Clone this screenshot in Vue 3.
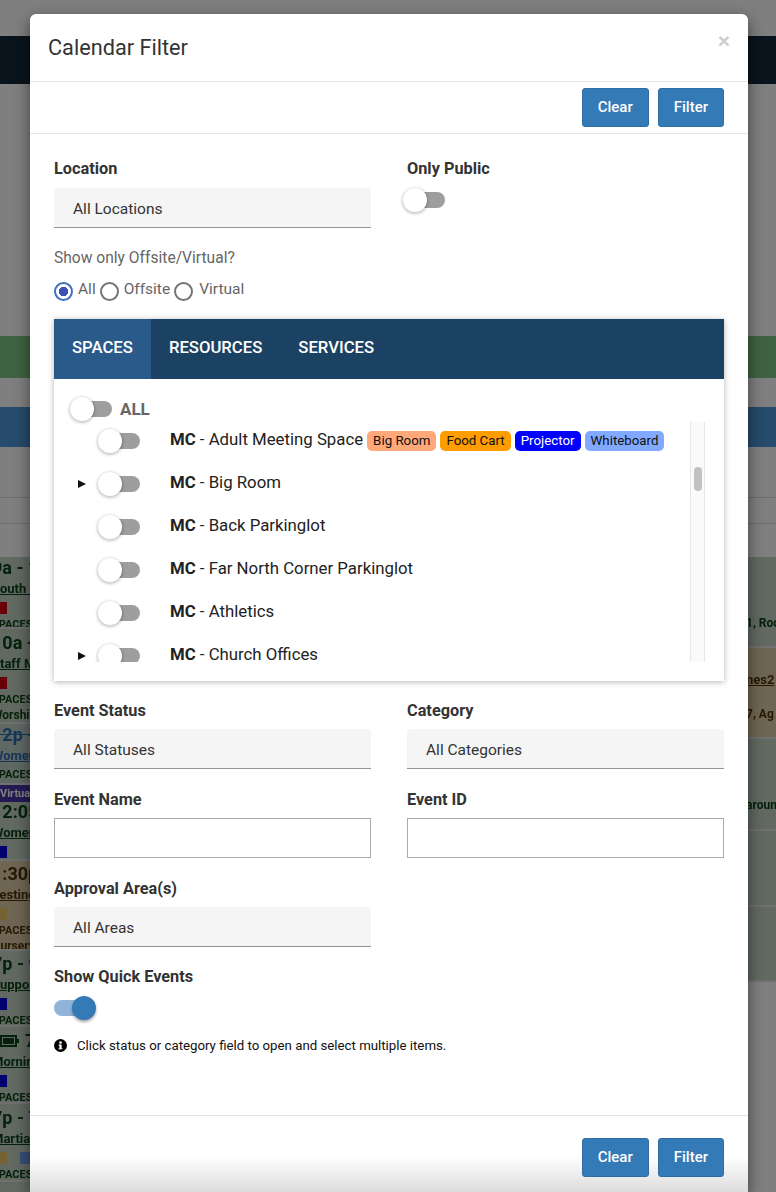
<template>
  <div class="page">
    <div class="backdrop-page">
      <div class="top-strip"></div>
      <div class="nav-bar"></div>
      <div class="spacer-a"></div>
      <div class="green-bar"></div>
      <div class="spacer-b"></div>
      <div class="blue-bar"></div>
      <div class="spacer-c"></div>
      <div class="rule"></div>
      <div class="spacer-d"></div>
      <div class="rule"></div>
      <div class="spacer-e"></div>
      <div class="cal-cols">
        <div class="cal-col">
          <div v-for="(ev, i) in leftEvents" :key="i" class="ev" :class="ev.tone" :style="{ height: ev.h + 'px', paddingTop: ev.pad + 'px' }">
            <div v-if="ev.badge" class="ev-badge">{{ ev.badge }}</div>
            <div class="ev-title" :class="{ struck: ev.struck }">
              <svg v-if="ev.battery" class="ev-batt" width="20" height="12" viewBox="0 0 20 12"><rect x="1" y="1" width="15" height="10" fill="none" stroke="currentColor" stroke-width="2"/><rect x="3" y="3" width="11" height="6" fill="currentColor"/><rect x="17" y="4" width="2" height="4" fill="currentColor"/></svg>{{ ev.title }}
            </div>
            <div class="ev-sub" :class="{ struck: ev.struck }">{{ ev.sub }}</div>
            <div v-if="ev.squares" class="ev-squares">
              <span v-for="c in ev.squares" :key="c" class="ev-sq" :style="{ background: c }"></span>
            </div>
            <div v-if="ev.spaces" class="ev-spaces">SPACES</div>
            <div v-if="ev.extra" class="ev-extra">{{ ev.extra }}</div>
          </div>
        </div>
        <div class="cal-col right">
          <div v-for="(ev, i) in rightEvents" :key="i" class="ev" :class="ev.tone" :style="{ height: ev.h + 'px', paddingTop: ev.pad + 'px' }">
            <div v-if="ev.under" class="ev-under">{{ ev.under }}</div>
            <div class="ev-place">{{ ev.text }}</div>
          </div>
        </div>
      </div>
    </div>
    <div class="overlay"></div>

    <div class="modal">
      <div class="modal-head">
        <h4 class="modal-title">Calendar Filter</h4>
        <span class="modal-close">×</span>
      </div>
      <div class="modal-tools">
        <button class="btn">Clear</button>
        <button class="btn">Filter</button>
      </div>

      <div class="modal-body">
        <div class="form-grid first">
          <div>
            <label class="lbl">Location</label>
            <div class="fake-select">All Locations</div>
          </div>
          <div>
            <label class="lbl">Only Public</label>
            <div class="sw public-sw"><span class="track"></span><span class="thumb"></span></div>
          </div>
        </div>

        <div class="offsite-q">Show only Offsite/Virtual?</div>
        <div class="radios">
          <span class="radio on"></span><span class="radio-text">All</span>
          <span class="radio"></span><span class="radio-text">Offsite</span>
          <span class="radio"></span><span class="radio-text">Virtual</span>
        </div>

        <div class="tab-card">
          <div class="tab-bar">
            <div v-for="(t, i) in tabs" :key="t" class="tab" :class="{ active: i === 0 }">{{ t }}</div>
          </div>
          <div class="tab-body">
            <div class="all-row">
              <div class="sw"><span class="track"></span><span class="thumb"></span></div>
              <span class="all-text">ALL</span>
            </div>
            <div class="tree-wrap">
              <div class="tree">
                <div v-for="row in spaces" :key="row.name" class="tree-row">
                  <span class="caret"><span v-if="row.kids" class="caret-shape"></span></span>
                  <div class="sw"><span class="track"></span><span class="thumb"></span></div>
                  <span class="row-name"><b>MC</b> - {{ row.name }}</span>
                  <span v-for="tag in row.tags" :key="tag.text" class="tag" :style="{ background: tag.bg, color: tag.fg }">{{ tag.text }}</span>
                </div>
              </div>
              <div class="scroll-track"><span class="scroll-thumb"></span></div>
            </div>
          </div>
        </div>

        <div class="form-grid lower">
          <div>
            <label class="lbl">Event Status</label>
            <div class="fake-select">All Statuses</div>
          </div>
          <div>
            <label class="lbl">Category</label>
            <div class="fake-select">All Categories</div>
          </div>
          <div>
            <label class="lbl">Event Name</label>
            <input class="txt" type="text" />
          </div>
          <div>
            <label class="lbl">Event ID</label>
            <input class="txt" type="text" />
          </div>
          <div>
            <label class="lbl">Approval Area(s)</label>
            <div class="fake-select">All Areas</div>
          </div>
        </div>

        <label class="lbl quick-lbl">Show Quick Events</label>
        <div class="sw quick-sw"><span class="track"></span><span class="thumb"></span></div>

        <div class="info-line">
          <svg width="13" height="13" viewBox="0 0 13 13">
            <circle cx="6.5" cy="6.5" r="6.5" fill="#000" />
            <circle cx="6.5" cy="3.5" r="1.3" fill="#fff" />
            <rect x="5.4" y="5.6" width="2.2" height="4" fill="#fff" />
            <rect x="4.6" y="5.6" width="2" height="1" fill="#fff" />
            <rect x="4.6" y="9.2" width="3.8" height="1.1" fill="#fff" />
          </svg>
          <span>Click status or category field to open and select multiple items.</span>
        </div>
      </div>

      <div class="modal-foot">
        <button class="btn">Clear</button>
        <button class="btn">Filter</button>
      </div>
    </div>
  </div>
</template>

<script setup>
const tabs = ['Spaces', 'Resources', 'Services']

const spaces = [
  {
    name: 'Adult Meeting Space',
    tags: [
      { text: 'Big Room', bg: '#ffa97b', fg: '#111' },
      { text: 'Food Cart', bg: '#ff9c00', fg: '#111' },
      { text: 'Projector', bg: '#0000ff', fg: '#fff' },
      { text: 'Whiteboard', bg: '#80a9ff', fg: '#111' }
    ]
  },
  { name: 'Big Room', kids: true },
  { name: 'Back Parkinglot' },
  { name: 'Far North Corner Parkinglot' },
  { name: 'Athletics' },
  { name: 'Church Offices', kids: true }
]

const RED = '#d00010'
const BLUE = '#0000e0'
const GOLD = '#e8c460'

const leftEvents = [
  { tone: 'green', h: 72, pad: 1, title: '9a - 10a', sub: 'South Hall', squares: [RED], spaces: true },
  { tone: 'green', h: 95, pad: 4, title: '10a - 11a', sub: 'Staff Mtg', squares: [RED], spaces: true, extra: 'Worship' },
  { tone: 'slate', h: 61, pad: 1, title: '12p - 1p', sub: 'Women', spaces: true, struck: true },
  { tone: 'green', h: 76, pad: 0, badge: 'Virtual', title: '12:05p', sub: 'Women', squares: [BLUE] },
  { tone: 'tan', h: 90, pad: 3, title: '1:30p - 2p', sub: 'Testing', squares: [GOLD], spaces: true, extra: 'Nursery' },
  { tone: 'green', h: 76, pad: 3, title: '7p - 9p', sub: 'Support', squares: [BLUE], spaces: true },
  { tone: 'green', h: 77, pad: 4, battery: true, title: '7p', sub: 'Morning', squares: [BLUE], spaces: true },
  { tone: 'green', h: 78, pad: 4, title: '7p - 7p', sub: 'Martial', squares: [GOLD, '#6fa0e8'], spaces: true },
  { tone: 'green', h: 20, pad: 8, title: '7p - 8p', sub: '' }
]

const rightEvents = [
  { tone: 'green', h: 91, pad: 58, text: '1, Room' },
  { tone: 'tan', h: 91, pad: 22, under: 'nes2', text: '7, Ag' },
  { tone: 'green', h: 92, pad: 58, text: 'around' },
  { tone: 'green', h: 76, pad: 0, text: '' },
  { tone: 'green', h: 75, pad: 0, text: '' }
]
</script>

<style scoped>
.page { position: relative; width: 776px; height: 1192px; overflow: hidden; background: #fff; font-family: Roboto, "Liberation Sans", sans-serif; }

.backdrop-page { filter: blur(0.5px); }
.top-strip { height: 36px; }
.nav-bar { height: 48px; background: #14293a; }
.spacer-a { height: 252px; }
.green-bar { height: 42px; background: #7fc684; }
.spacer-b { height: 29px; }
.blue-bar { height: 40px; background: #4c96d8; }
.spacer-c { height: 50px; }
.rule { height: 1px; background: #d8d8d8; }
.spacer-d { height: 25px; }
.spacer-e { height: 33px; }

.cal-cols { display: flex; justify-content: space-between; }
.cal-col { width: 30px; overflow: hidden; }
.cal-col.right { width: 28px; }

.ev { box-sizing: border-box; overflow: hidden; white-space: nowrap; border-bottom: 2px solid #e0e0e0; font-weight: 700; }
.ev.green { background: #c2d2c2; color: #0b4316; }
.ev.slate { background: #c0d0c8; color: #0b4316; }
.ev.tan { background: #dccca4; color: #4e3208; }

.ev-title, .ev-sub, .ev-spaces, .ev-extra { margin-left: -8px; }
.ev-title { font-size: 18px; line-height: 20px; }
.ev-title.struck { color: #2a6cb0; text-decoration: line-through; }
.ev-sub { font-size: 13px; line-height: 21px; text-decoration: underline; }
.ev-sub.struck { color: #2a6cb0; }
.ev-squares { display: flex; gap: 13px; height: 17px; align-items: center; margin-left: -7px; }
.ev-sq { width: 14px; height: 12px; flex-shrink: 0; }
.ev-spaces { font-size: 11px; line-height: 17px; }
.ev-extra { font-size: 12px; line-height: 14px; }
.ev-badge { background: #4a32a8; color: #fff; font-size: 11px; line-height: 17px; }
.ev-batt { margin-left: 8px; margin-right: 5px; }
.ev-under { font-size: 13px; line-height: 20px; text-decoration: underline; margin-bottom: 16px; margin-left: -2px; }
.ev-place { font-size: 12px; line-height: 16px; margin-left: -2px; }

.overlay { position: absolute; inset: 0; background: rgba(0, 0, 0, 0.5); }

.modal {
  position: absolute; left: 30px; top: 14px; width: 718px; background: #fff;
  border-radius: 6px 6px 0 0; box-shadow: 0 5px 15px rgba(0, 0, 0, 0.5);
}

.modal-head { position: relative; height: 68px; box-sizing: border-box; padding: 20px 18px 0; border-bottom: 1px solid #e5e5e5; }
.modal-title { margin: 0; font-size: 21.7px; font-weight: 400; line-height: 27px; color: #333; }
.modal-close {
  position: absolute; right: 18px; top: 13px; font-family: "Liberation Sans", sans-serif;
  font-size: 21px; line-height: 28px; font-weight: 700; color: #cdcdcd;
}

.modal-tools { display: flex; justify-content: flex-end; gap: 9px; height: 52px; box-sizing: border-box; padding: 6px 24px 0; border-bottom: 1px solid #e5e5e5; }

.btn {
  height: 39px; padding: 0 15px; background: #337ab7; border: 1px solid #2e6da4; border-radius: 3px;
  color: #fff; font-family: Roboto, sans-serif; font-size: 15px; font-weight: 500; line-height: 37px;
}

.modal-body { padding: 24px 24px 0; height: 981px; box-sizing: border-box; }

.form-grid { display: grid; grid-template-columns: 317px 317px; column-gap: 36px; row-gap: 21px; }
.lbl { display: block; height: 21px; font-size: 16.3px; font-weight: 700; line-height: 19px; color: #333; margin-bottom: 7px; }
.first .lbl { line-height: 21px; margin-bottom: 9px; }

.fake-select {
  box-sizing: border-box; height: 40px; padding-left: 19px; background: #f5f5f5; border-bottom: 1px solid #949494;
  border-radius: 4px 4px 0 0; font-size: 15.5px; line-height: 42px; color: #333;
}

.txt { display: block; box-sizing: border-box; width: 100%; height: 40px; border: 1px solid #aaa; background: #fff; padding: 0; margin: 0; }

.sw { position: relative; width: 42px; height: 24px; flex-shrink: 0; }
.track { position: absolute; left: 6px; right: 0; top: 4px; height: 16px; border-radius: 8px; background: #9e9e9e; }
.thumb { position: absolute; left: 0; top: 0; width: 24px; height: 24px; border-radius: 50%; background: #fff; box-shadow: 0 1px 3px 1px rgba(0, 0, 0, 0.22); }
.public-sw { margin-left: -4px; }

.offsite-q { margin-top: 20px; font-size: 15.6px; line-height: 21px; color: #666; }
.radios { display: flex; align-items: flex-start; margin-top: 11px; height: 20px; font-size: 15.5px; line-height: 18px; color: #666; }
.radio { box-sizing: border-box; width: 19px; height: 19px; margin-top: 2px; border: 2px solid #757575; border-radius: 50%; background: #fff; }
.radio.on { border-color: #3f6fc0; background: radial-gradient(circle, #3f51b5 0 4.5px, #fff 5px); }
.radio-text { margin: 0 4px 0 5px; }
.radio-text:last-child { margin-left: 6px; }

.tab-card { margin-top: 19px; box-shadow: 0 1px 6px rgba(0, 0, 0, 0.3); }
.tab-bar { display: flex; height: 60px; background: #1c4263; }
.tab { padding: 0 18px; font-size: 16.7px; font-weight: 500; line-height: 58px; text-transform: uppercase; color: #fff; }
.tab.active { background: #2a5a8a; }

.tab-body { height: 302px; box-sizing: border-box; padding: 18px 19px 0 16px; }
.all-row { display: flex; align-items: center; gap: 8px; height: 24px; }
.all-text { font-size: 17px; font-weight: 700; color: #666; }

.tree-wrap { display: flex; height: 240px; margin-top: 1px; }
.tree { flex: 1; overflow: hidden; padding-left: 8px; }
.tree-row { display: flex; align-items: center; height: 43px; }
.tree-row:first-child { margin-top: -3px; }
.caret { width: 20px; flex-shrink: 0; display: flex; }
.caret-shape { border-left: 8px solid #111; border-top: 4.5px solid transparent; border-bottom: 4.5px solid transparent; }
.row-name { margin: 0 0 3px 30px; font-size: 16.8px; color: #222; white-space: nowrap; }
.row-name b { font-weight: 700; }
.tag { margin-left: 4px; height: 20px; padding: 0 6px; border-radius: 5px; font-size: 13.3px; line-height: 20px; white-space: nowrap; }

.scroll-track { position: relative; box-sizing: border-box; width: 15px; height: 240px; background: #fafafa; border-left: 1px solid #e8e8e8; border-right: 1px solid #e8e8e8; }
.scroll-thumb { position: absolute; left: 3px; top: 45px; width: 8px; height: 24px; border-radius: 4px; background: #c1c1c1; }

.lower { margin-top: 20px; }
.quick-lbl { margin-top: 19px; margin-bottom: 9px; line-height: 21px; }
.quick-sw .track { left: 0; right: 6px; background: #8fb4d8; }
.quick-sw .thumb { left: 18px; background: #337ab7; box-shadow: 0 2px 3px rgba(0, 0, 0, 0.35); }

.info-line { display: flex; align-items: center; gap: 10px; margin-top: 16px; font-size: 13.25px; line-height: 19px; color: #111; }

.modal-foot {
  display: flex; justify-content: flex-end; gap: 9px; height: 77px; box-sizing: border-box; padding: 22px 24px 0;
  border-top: 1px solid #e5e5e5; background: linear-gradient(#fff 0, #fff 40px, #dcdcdc 100%);
}
</style>

<style>
html, body { margin: 0; overflow: hidden; }
</style>
